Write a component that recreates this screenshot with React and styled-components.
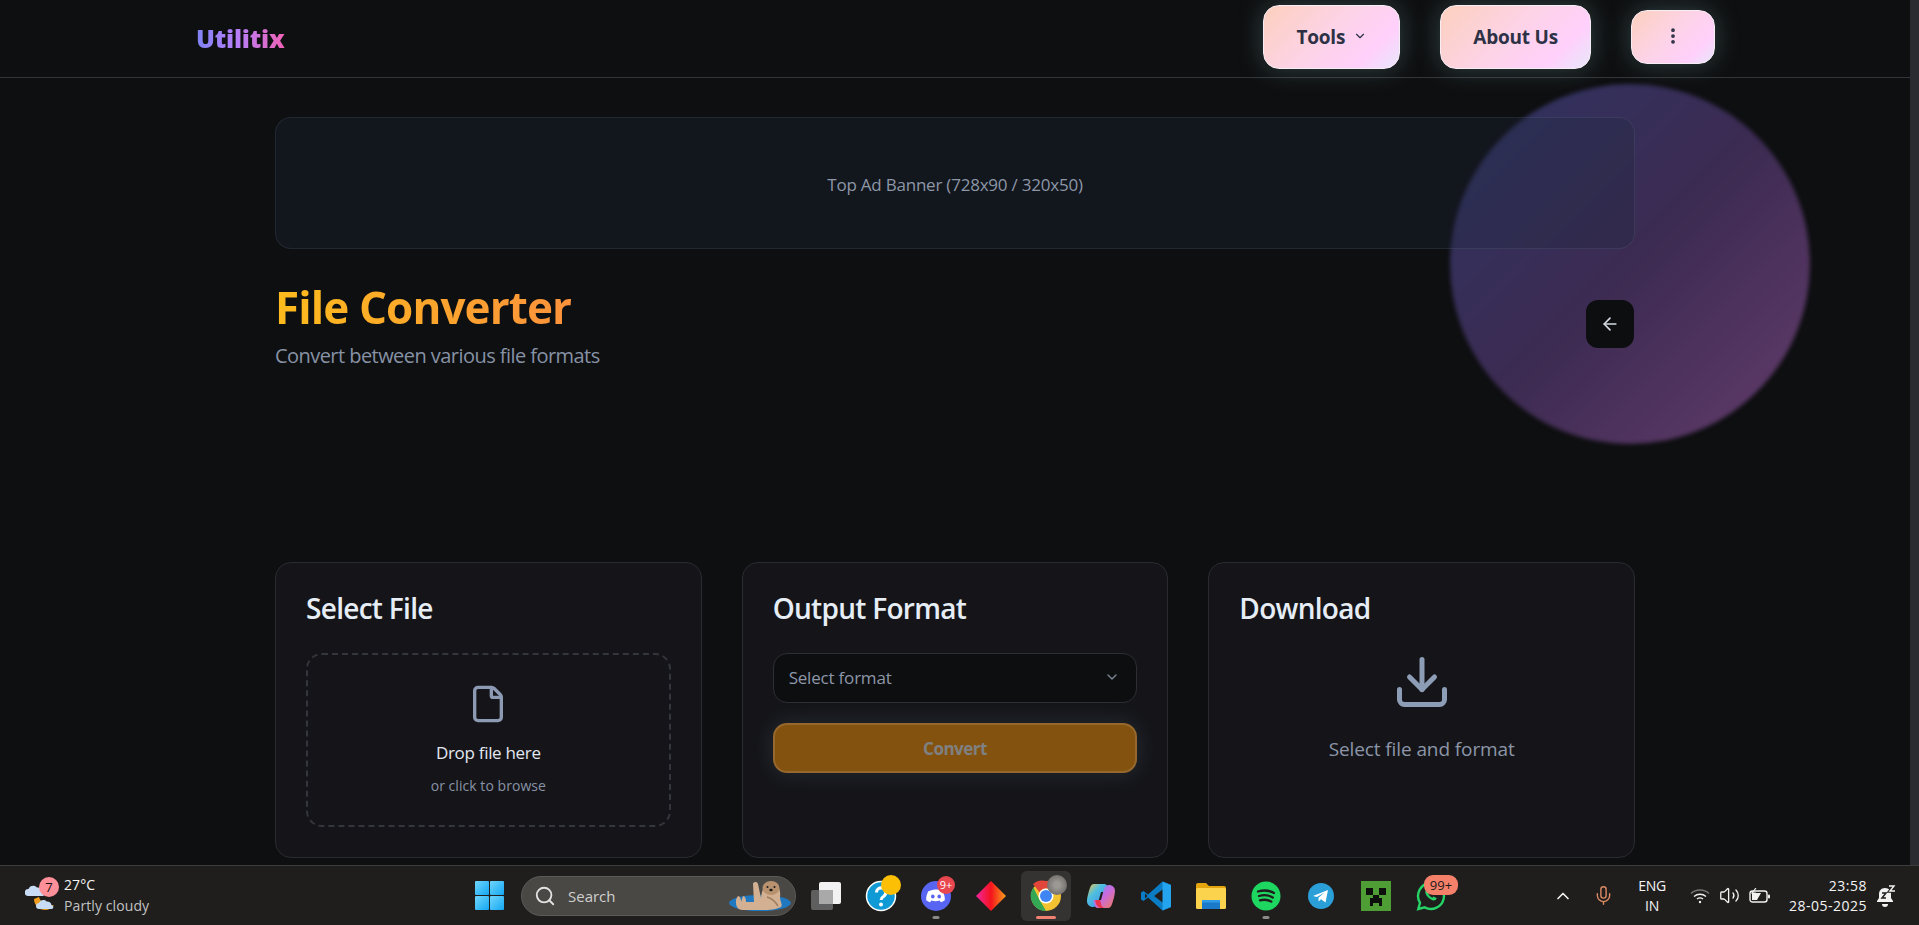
import { ArrowLeft, ChevronDown, ChevronUp, Download, EllipsisVertical, File, Mic, Search, Volume2 } from "lucide-react";
import styled, { createGlobalStyle } from "styled-components";

const GlobalStyle = createGlobalStyle`
  html, body {
    margin: 0;
    height: 100%;
    overflow: hidden;
    background: #0e0f11;
  }
  * {
    box-sizing: border-box;
  }
  body {
    font-family: "Open Sans", "Noto Sans", sans-serif;
  }
`;

const taskIcons = {
  taskView: (
    <svg width="30" height="28" viewBox="0 0 30 28">
      <rect x="0" y="8" width="22" height="20" rx="2" fill="#5f5f5f" />
      <rect x="8" y="0" width="22" height="22" rx="2" fill="#f2f2f2" />
      <rect x="8" y="8" width="14" height="14" fill="#a9a9a9" />
    </svg>
  ),
  help: (
    <svg width="32" height="32" viewBox="0 0 32 32">
      <circle cx="16" cy="16" r="14.5" fill="#0f9ad6" stroke="#fff" strokeWidth="1.5" />
      <path d="M11.5 12.5a4.6 4.6 0 1 1 7.2 3.8c-1.7 1.1-2.6 2-2.6 3.7" fill="none" stroke="#fff" strokeWidth="3" />
      <circle cx="16" cy="24.5" r="2" fill="#fff" />
    </svg>
  ),
  discord: (
    <svg width="30" height="30" viewBox="0 0 30 30">
      <circle cx="15" cy="15" r="15" fill="#5865f2" />
      <path d="M8.5 10c4-2 9-2 13 0 1.700 2.800 2.500 6 2.300 9.300-1.300 1-2.700 1.600-4 2l-1-1.700c-2.900.9-5.700.9-8.600 0l-1 1.700c-1.400-.4-2.700-1-4-2-.2-3.300.6-6.500 2.300-9.300Z" fill="#fff" />
      <ellipse cx="11.800" cy="15.500" rx="1.800" ry="2" fill="#5865f2" />
      <ellipse cx="18.200" cy="15.500" rx="1.800" ry="2" fill="#5865f2" />
    </svg>
  ),
  diamond: (
    <svg width="30" height="30" viewBox="0 0 30 30">
      <defs>
        <linearGradient id="diamondFill" x1="0" y1="0" x2="1" y2="0">
          <stop offset="0" stopColor="#f0269f" />
          <stop offset="0.5" stopColor="#f5131d" />
          <stop offset="1" stopColor="#f9a11b" />
        </linearGradient>
      </defs>
      <path d="M15 0 30 15 15 30 0 15Z" fill="url(#diamondFill)" />
    </svg>
  ),
  chrome: (
    <svg width="32" height="32" viewBox="0 0 32 32">
      <circle cx="16" cy="16" r="15" fill="#f2c231" />
      <path d="M16 1a15 15 0 0 1 13 7.500H16a7.500 7.500 0 0 0-6.500 3.750L3 3.900A15 15 0 0 1 16 1Z" fill="#e2453a" />
      <path d="M3.400 7.500 9.500 19.800 16 31A15 15 0 0 1 3.400 7.500Z" fill="#34a754" />
      <circle cx="16" cy="16" r="7.500" fill="#fff" />
      <circle cx="16" cy="16" r="6" fill="#3f86f4" />
    </svg>
  ),
  copilot: (
    <svg width="30" height="30" viewBox="0 0 30 30">
      <defs>
        <linearGradient id="copilotA" x1="0" y1="0" x2="1" y2="1">
          <stop offset="0" stopColor="#f6c344" />
          <stop offset="0.35" stopColor="#4fc0e0" />
          <stop offset="1" stopColor="#3f7fe8" />
        </linearGradient>
        <linearGradient id="copilotB" x1="0" y1="0" x2="1" y2="1">
          <stop offset="0" stopColor="#5aa0f0" />
          <stop offset="0.5" stopColor="#c86be0" />
          <stop offset="1" stopColor="#f27a5a" />
        </linearGradient>
      </defs>
      <path d="M8 3h10c1.500 0 2.500.5 3 2l2 6H15l-3 11c-1 3-2.500 4-5 4-3.500 0-6-2.500-6-6 0-3 2-11 3-13 .8-2.600 2-4 4-4Z" fill="url(#copilotA)" />
      <path d="M22 27H12c-1.500 0-2.500-.5-3-2l-2-6h8l3-11c1-3 2.500-4 5-4 3.500 0 6 2.500 6 6 0 3-2 11-3 13-.8 2.600-2 4-4 4Z" fill="url(#copilotB)" />
      <path d="M10 23c2 3 3 4 5 4h3c-2-1-3-3-3-5l-1-3H9Z" fill="#e8344e" />
    </svg>
  ),
  vscode: (
    <svg width="30" height="30" viewBox="0 0 30 30">
      <path d="M21.500 0.500 30 4v22l-8.500 3.500L7 16.500 2.500 20 0 18.500V11.500L2.500 10 7 13.500Z" fill="#0a7cc4" />
      <path d="M21.500 0.500 30 4v22l-8.500 3.500V21L13 15l8.500-6Z" fill="#24a3ee" />
      <path d="M21.500 8.500v13L13 15Z" fill="#1f1e1d" />
      <path d="M4 12.500 6.500 15 4 17.500Z" fill="#1f1e1d" />
    </svg>
  ),
  folder: (
    <svg width="30" height="28" viewBox="0 0 30 28">
      <path d="M0 3a2 2 0 0 1 2-2h8l3 3h15a2 2 0 0 1 2 2v4H0Z" fill="#e3a40d" />
      <rect x="0" y="6" width="30" height="21" rx="1.500" fill="#fbd34c" />
      <path d="M6 27v-7a2 2 0 0 1 2-2h14a2 2 0 0 1 2 2v7Z" fill="#1a79c8" />
      <rect x="6" y="18" width="18" height="2.500" fill="#2f9ae6" />
    </svg>
  ),
  spotify: (
    <svg width="30" height="30" viewBox="0 0 30 30">
      <circle cx="15" cy="15" r="14.500" fill="#1ed760" />
      <path d="M7 10.500c5.500-1.600 11.500-1.100 16 1.500M8 15c4.800-1.300 10-.8 13.800 1.500M9 19.300c4-1 8-.6 11.300 1.300" fill="none" stroke="#1f1e1d" strokeWidth="2.300" strokeLinecap="round" />
    </svg>
  ),
  telegram: (
    <svg width="26" height="26" viewBox="0 0 26 26">
      <circle cx="13" cy="13" r="13" fill="#2a9fd8" />
      <path d="M5 13 20 7l-2.500 12.500-4.500-3.300-2.300 2.200-.3-3.700 6-5.300-7.500 4.600Z" fill="#fff" />
    </svg>
  ),
  creeper: (
    <svg width="30" height="30" viewBox="0 0 30 30">
      <rect width="30" height="30" fill="#4f9e35" />
      <path d="M5 7h7v7H5ZM18 7h7v7h-7ZM12 14h6v3h3v8h-3v-3h-6v3H9v-8h3Z" fill="#0c0f0b" />
    </svg>
  ),
  whatsapp: (
    <svg width="30" height="30" viewBox="0 0 30 30">
      <path d="M15 2a13 13 0 0 0-11 19.800L2.300 28l6.400-1.600A13 13 0 1 0 15 2Z" fill="none" stroke="#25d366" strokeWidth="2.400" />
      <path d="M10.500 8.500c-2 1.500-1.500 4.500 1.500 7.800 3 3 6 4 7.800 2.500l1-1.500-3.200-1.800-1.300 1.300c-1.500-.6-3.300-2.400-4-4l1.300-1.200-1.600-3.200Z" fill="#25d366" />
    </svg>
  ),
};

const App = () => {
  return (
    <Screen>
      <GlobalStyle />
      <Browser>
        <Page>
          <Header>
            <Logo>Utilitix</Logo>
            <Nav>
              <NavButton>
                Tools
                <ChevronDown size={14} strokeWidth={2} />
              </NavButton>
              <NavButton>About Us</NavButton>
              <MenuButton>
                <EllipsisVertical size={20} strokeWidth={2.5} />
              </MenuButton>
            </Nav>
          </Header>
          <Blob />
          <Main>
            <AdBanner>Top Ad Banner (728x90 / 320x50)</AdBanner>
            <TitleRow>
              <div>
                <Title>File Converter</Title>
                <Subtitle>Convert between various file formats</Subtitle>
              </div>
              <BackButton>
                <ArrowLeft size={20} strokeWidth={2} />
              </BackButton>
            </TitleRow>
            <Cards>
              <Card>
                <CardTitle>Select File</CardTitle>
                <DropZone>
                  <File size={40} strokeWidth={2} color="#8c9bb3" />
                  <DropTitle>Drop file here</DropTitle>
                  <DropHint>or click to browse</DropHint>
                </DropZone>
              </Card>
              <Card>
                <CardTitle>Output Format</CardTitle>
                <SelectBox>
                  Select format
                  <ChevronDown size={16} strokeWidth={2} color="#7d8695" />
                </SelectBox>
                <ConvertButton>Convert</ConvertButton>
              </Card>
              <Card>
                <CardTitle>Download</CardTitle>
                <DownloadBody>
                  <Download size={60} strokeWidth={2} color="#8c9db5" />
                  <DownloadHint>Select file and format</DownloadHint>
                </DownloadBody>
              </Card>
            </Cards>
          </Main>
        </Page>
        <Scrollbar />
      </Browser>
      <Taskbar>
        <Weather>
          <WeatherIcon>
            <svg width="36" height="36" viewBox="0 0 36 36">
              <path d="M9 21c0 6 5 11 11 11 4 0 7-2 9-5-6 1-13-1-15-8Z" fill="#ef9b1c" />
              <path d="M3 18a3.500 3.500 0 0 1 .5-7c1-3.500 6-4.500 8.500-1.500 3-.5 5.500 1.500 5.500 4.500a2 2 0 0 1 0 4Z" fill="#c9dcf5" />
              <path d="M14 31a3 3 0 0 1 0-6c1-3 5.500-4 7.500-1.500 2.500-.3 5 1.300 5 3.700a1.900 1.900 0 0 1 0 3.800Z" fill="#c9dcf5" />
            </svg>
            <WeatherBadge>7</WeatherBadge>
          </WeatherIcon>
          <WeatherText>
            <span>27°C</span>
            <WeatherNote>Partly cloudy</WeatherNote>
          </WeatherText>
        </Weather>
        <Dock>
          <TaskSlot>
            <WindowsLogo>
              <i />
              <i />
              <i />
              <i />
            </WindowsLogo>
          </TaskSlot>
          <SearchPill>
            <Search size={22} strokeWidth={2} color="#e2e2e2" />
            <span>Search</span>
            <Otter>
              <svg width="64" height="34" viewBox="0 0 64 34">
                <ellipse cx="31" cy="24" rx="31" ry="8" fill="#1f78c0" />
                <path d="M8 28c-2-4-1-9 1-11 2 0 3 3 3 6l2-6c2 0 3 3 3 6h8l-1-18c0-2 4-3 5 0l3 14c1-8 3-15 10-15 7 0 10 6 9 14 0 5 3 7 1 10-4 2-9 3-14 3H14c-3 0-5-1-6-3Z" fill="#d3b091" />
                <ellipse cx="42" cy="9" rx="8.500" ry="7" fill="#b8926f" />
                <circle cx="38.500" cy="8" r="1" fill="#1a1a1a" />
                <circle cx="45.500" cy="8" r="1" fill="#1a1a1a" />
                <ellipse cx="42" cy="11" rx="1.700" ry="1.200" fill="#1a1a1a" />
                <path d="M38 18c4 1 8 4 11 9" fill="none" stroke="#9c7d62" strokeWidth="1.500" />
              </svg>
            </Otter>
          </SearchPill>
          <TaskSlot>{taskIcons.taskView}</TaskSlot>
          <TaskSlot>
            {taskIcons.help}
            <HelpDot />
          </TaskSlot>
          <TaskSlot open>
            {taskIcons.discord}
            <CountBadge>9+</CountBadge>
          </TaskSlot>
          <TaskSlot>{taskIcons.diamond}</TaskSlot>
          <TaskSlot active>
            {taskIcons.chrome}
            <Avatar />
          </TaskSlot>
          <TaskSlot>{taskIcons.copilot}</TaskSlot>
          <TaskSlot>{taskIcons.vscode}</TaskSlot>
          <TaskSlot>{taskIcons.folder}</TaskSlot>
          <TaskSlot open>{taskIcons.spotify}</TaskSlot>
          <TaskSlot>{taskIcons.telegram}</TaskSlot>
          <TaskSlot>{taskIcons.creeper}</TaskSlot>
          <TaskSlot>
            {taskIcons.whatsapp}
            <WideBadge>99+</WideBadge>
          </TaskSlot>
        </Dock>
        <Tray>
          <ChevronUp size={20} strokeWidth={2} color="#f2f2f2" />
          <MicSlot>
            <Mic size={21} strokeWidth={1.6} color="#dd8a63" />
          </MicSlot>
          <Lang>
            <span>ENG</span>
            <span>IN</span>
          </Lang>
          <TrayIcons>
            <svg width="20" height="16" viewBox="0 0 20 16" fill="none" stroke="#f2f2f2" strokeWidth="1.400">
              <path d="M1 5.500c5-4.600 13-4.600 18 0" stroke="#777" />
              <path d="M4 8.500c3.500-3 8.500-3 12 0M7 11c2-1.500 4-1.500 6 0" />
              <circle cx="10" cy="14" r="1.200" fill="#f2f2f2" stroke="none" />
            </svg>
            <Volume2 size={21} strokeWidth={1.5} color="#f2f2f2" />
            <svg width="22" height="16" viewBox="0 0 22 16">
              <rect x="1" y="3" width="17" height="11" rx="2.500" fill="none" stroke="#f2f2f2" strokeWidth="1.400" />
              <rect x="19" y="6.500" width="2" height="4" rx="1" fill="#f2f2f2" />
              <path d="M3 12V5h9l-4 7Z" fill="#f2f2f2" />
              <path d="M7 0 3 5h3l-2 4" fill="none" stroke="#f2f2f2" strokeWidth="1.200" />
            </svg>
          </TrayIcons>
          <Clock>
            <span>23:58</span>
            <span>28-05-2025</span>
          </Clock>
          <svg width="20" height="22" viewBox="0 0 20 22">
            <path d="M9 3c-4 0-6 3-6 6v4l-2 3v1h16v-1l-2-3V9c0-3-2-6-6-6Z" fill="#f2f2f2" />
            <path d="M6 19a3 3 0 0 0 6 0Z" fill="#f2f2f2" />
            <path d="M13 1h5l-4 5h5" fill="none" stroke="#1f1e1d" strokeWidth="3.400" />
            <path d="M13 1h5l-4 5h5" fill="none" stroke="#f2f2f2" strokeWidth="1.400" />
            <path d="M6 8h4l-4 5h4" fill="none" stroke="#1f1e1d" strokeWidth="1.500" />
          </svg>
        </Tray>
      </Taskbar>
    </Screen>
  );
};

const Screen = styled.div`
  height: 925px;
  display: flex;
  flex-direction: column;
  overflow: hidden;
`;
const Browser = styled.div`
  height: 865px;
  display: flex;
`;
const Page = styled.div`
  position: relative;
  flex: 1;
  min-width: 0;
  background: #0e0f11;
  overflow: hidden;
`;
const Scrollbar = styled.div`
  width: 9px;
  background: #2a2b31;
`;
const Header = styled.header`
  height: 78px;
  padding: 5px 195px 0 196px;
  border-bottom: 1px solid #33353a;
  display: flex;
  justify-content: space-between;
  align-items: flex-start;
`;
const Logo = styled.div`
  margin-top: 16px;
  font-size: 25px;
  font-weight: 800;
  line-height: 34px;
  letter-spacing: -0.2px;
  background: linear-gradient(90deg, #7f83f5, #b57ffb 45%, #f062b5);
  -webkit-background-clip: text;
  background-clip: text;
  color: transparent;
`;
const Nav = styled.nav`
  position: relative;
  z-index: 2;
  display: flex;
  align-items: center;
  gap: 40px;
  height: 64px;
`;
const NavButton = styled.button`
  height: 64px;
  padding: 0 32px;
  display: flex;
  align-items: center;
  gap: 8px;
  border: 1.5px solid #f7edf5;
  border-radius: 16px;
  background: linear-gradient(135deg, #fcd0bd 0%, #fdd3e6 45%, #ffd0fb 78%, #e8e6fb 100%);
  box-shadow: 0 0 26px rgba(160, 225, 215, 0.25);
  color: #2d3145;
  font-family: inherit;
  font-size: 19px;
  font-weight: 700;
  letter-spacing: -0.2px;
  svg {
    margin-top: -2px;
  }
`;
const MenuButton = styled(NavButton)`
  width: 84px;
  height: 54px;
  padding: 0;
  justify-content: center;
`;
const Blob = styled.div`
  position: absolute;
  left: 1450px;
  top: 84px;
  width: 360px;
  height: 360px;
  border-radius: 50%;
  background: linear-gradient(135deg, #2e3462 0%, #3c2b52 50%, #643c6c 100%);
  filter: blur(2px);
`;
const Main = styled.main`
  position: relative;
  width: 1360px;
  margin-left: 275px;
  padding-top: 39px;
`;
const AdBanner = styled.div`
  height: 132px;
  padding-top: 2px;
  display: flex;
  align-items: center;
  justify-content: center;
  border: 1px solid rgba(148, 163, 184, 0.13);
  border-radius: 16px;
  background: rgba(30, 41, 59, 0.3);
  color: #8d97a8;
  font-size: 17px;
  letter-spacing: -0.22px;
`;
const TitleRow = styled.div`
  height: 313px;
  padding-top: 28px;
  display: flex;
  justify-content: space-between;
  align-items: flex-start;
`;
const Title = styled.h1`
  margin: 0;
  font-size: 44px;
  font-weight: 700;
  line-height: 60px;
  letter-spacing: -0.9px;
  background: linear-gradient(90deg, #fdbb1c, #fb923c);
  -webkit-background-clip: text;
  background-clip: text;
  color: transparent;
  width: fit-content;
`;
const Subtitle = styled.p`
  margin: 5px 0 0;
  color: #8792a5;
  font-size: 20px;
  line-height: 28px;
  letter-spacing: -0.55px;
`;
const BackButton = styled.button`
  margin: 23px 1px 0 0;
  width: 48px;
  height: 48px;
  display: flex;
  align-items: center;
  justify-content: center;
  border: none;
  border-radius: 12px;
  background: #0d0e10;
  color: #d5dae2;
`;
const Cards = styled.div`
  display: grid;
  grid-template-columns: repeat(3, 1fr);
  gap: 40px;
`;
const Card = styled.section`
  height: 296px;
  padding: 26px 30px 30px;
  border: 1px solid #2a2b30;
  border-radius: 16px;
  background: #151519;
`;
const CardTitle = styled.h2`
  margin: 0 0 26px;
  color: #e6edf5;
  font-size: 28px;
  font-weight: 600;
  line-height: 38px;
  letter-spacing: -0.7px;
`;
const DropZone = styled.div`
  height: 174px;
  display: flex;
  flex-direction: column;
  align-items: center;
  padding-top: 29px;
  border: 2px dashed #33363c;
  border-radius: 16px;
`;
const DropTitle = styled.div`
  margin-top: 16px;
  color: #e2e8f0;
  font-size: 17px;
  line-height: 26px;
  letter-spacing: -0.3px;
`;
const DropHint = styled.div`
  margin-top: 10px;
  color: #8892a6;
  font-size: 14px;
  line-height: 20px;
  letter-spacing: 0.05px;
`;
const SelectBox = styled.div`
  height: 50px;
  padding: 0 16px 2px 15px;
  display: flex;
  align-items: center;
  justify-content: space-between;
  border: 1px solid #2c2e33;
  border-radius: 14px;
  background: #0d0e10;
  color: #8d97a8;
  font-size: 17px;
  letter-spacing: -0.2px;
`;
const ConvertButton = styled.button`
  width: 100%;
  height: 50px;
  margin-top: 20px;
  border: 2px solid #96682d;
  border-radius: 14px;
  background: #84520f;
  box-shadow: 0 0 22px rgba(140, 190, 210, 0.14);
  color: #7f8081;
  font-family: inherit;
  font-size: 17px;
  font-weight: 700;
  letter-spacing: -0.5px;
`;
const DownloadBody = styled.div`
  display: flex;
  flex-direction: column;
  align-items: center;
  margin-top: -1px;
`;
const DownloadHint = styled.div`
  margin-top: 24px;
  color: #8c96a8;
  font-size: 19px;
  line-height: 26px;
  letter-spacing: -0.1px;
`;
const Taskbar = styled.footer`
  height: 60px;
  padding-left: 25px;
  display: flex;
  align-items: center;
  border-top: 1px solid #3c3c3c;
  background: #1f1e1d;
  color: #f4f4f4;
  font-size: 14px;
`;
const Weather = styled.div`
  width: 437px;
  display: flex;
  align-items: center;
  gap: 3px;
`;
const WeatherIcon = styled.div`
  position: relative;
  width: 36px;
  height: 36px;
`;
const WeatherBadge = styled.span`
  position: absolute;
  left: 14px;
  top: -1px;
  width: 20px;
  height: 20px;
  border-radius: 50%;
  background: #ff8f98;
  color: #111;
  font-size: 13px;
  line-height: 20px;
  text-align: center;
`;
const WeatherText = styled.div`
  display: flex;
  flex-direction: column;
  gap: 1px;
  line-height: 20px;
  font-size: 14px;
  letter-spacing: 0.1px;
`;
const WeatherNote = styled.span`
  color: #c2c2c2;
`;
const Dock = styled.div`
  display: flex;
  align-items: center;
`;
const TaskSlot = styled.div`
  position: relative;
  width: ${(props) => (props.active ? "50px" : "55px")};
  margin: ${(props) => (props.active ? "0 2.5px" : "0")};
  height: 50px;
  display: flex;
  align-items: center;
  justify-content: center;
  border-radius: 6px;
  background: ${(props) => (props.active ? "#353331" : "transparent")};
  &::after {
    content: "";
    display: ${(props) => (props.active || props.open ? "block" : "none")};
    position: absolute;
    bottom: 2px;
    left: 50%;
    transform: translateX(-50%);
    width: ${(props) => (props.active ? "20px" : "7px")};
    height: 3px;
    border-radius: 2px;
    background: ${(props) => (props.active ? "#f08070" : "#8a8a8a")};
  }
`;
const WindowsLogo = styled.div`
  width: 29px;
  height: 29px;
  display: grid;
  grid-template-columns: 1fr 1fr;
  gap: 1px;
  i {
    border-radius: 1px;
    background: linear-gradient(135deg, #6fd6fb, #14a7f3);
  }
`;
const SearchPill = styled.div`
  position: relative;
  width: 275px;
  height: 40px;
  margin: 0 2px 0 4px;
  padding-left: 12px;
  display: flex;
  align-items: center;
  gap: 12px;
  border: 1px solid #5a5a58;
  border-radius: 20px;
  background: #4a4845;
  color: #cfcfcf;
  font-size: 15px;
`;
const Otter = styled.div`
  position: absolute;
  right: 2px;
  bottom: 2px;
  height: 34px;
  display: flex;
`;
const HelpDot = styled.span`
  position: absolute;
  left: 28px;
  top: 4px;
  width: 20px;
  height: 20px;
  border-radius: 50%;
  background: #fdbf06;
`;
const CountBadge = styled.span`
  position: absolute;
  left: 29px;
  top: 5px;
  width: 18px;
  height: 18px;
  border-radius: 50%;
  background: #e8474f;
  color: #fff;
  font-size: 11px;
  line-height: 18px;
  text-align: center;
`;
const Avatar = styled.span`
  position: absolute;
  left: 26px;
  top: 4px;
  width: 20px;
  height: 20px;
  border-radius: 50%;
  background: radial-gradient(circle, #9c9894 20%, #66625f 90%);
`;
const WideBadge = styled.span`
  position: absolute;
  left: 21px;
  top: 4px;
  width: 34px;
  height: 20px;
  border-radius: 9px;
  background: #f4806a;
  color: #1b1b1b;
  font-size: 13px;
  line-height: 20px;
  text-align: center;
`;
const Tray = styled.div`
  margin-left: 95px;
  display: flex;
  align-items: center;
`;
const MicSlot = styled.div`
  margin-left: 20px;
  display: flex;
`;
const Lang = styled.div`
  width: 48px;
  margin: 0 14px 0 14px;
  display: flex;
  flex-direction: column;
  align-items: center;
  line-height: 20px;
  letter-spacing: -0.3px;
`;
const TrayIcons = styled.div`
  display: flex;
  align-items: center;
  gap: 9px;
`;
const Clock = styled.div`
  margin: 0 9px 0 18px;
  display: flex;
  flex-direction: column;
  align-items: flex-end;
  line-height: 20px;
  letter-spacing: 0.5px;
`;

export default App;
